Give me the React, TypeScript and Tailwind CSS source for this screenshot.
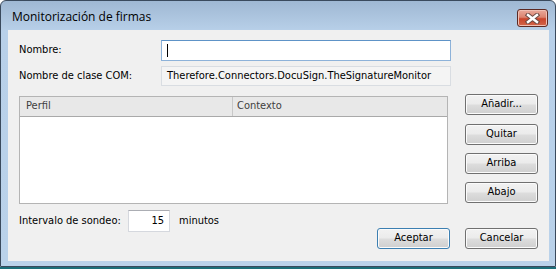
const btn =
  'flex h-[21px] w-[73px] items-center justify-center rounded-[3px] border border-[#707070] bg-[linear-gradient(to_bottom,#f2f2f2_0%,#ebebeb_48%,#dddddd_52%,#cfcfcf_100%)] text-[11px] text-black shadow-[inset_0_0_0_1px_#fbfbfb]';

function CloseButton() {
  return (
    <div className="ml-auto mr-[7px] mt-[8px] flex h-[18px] w-[31px] items-center justify-center rounded-[3px] border border-[#5c2a24] bg-[linear-gradient(to_bottom,#e9a99b_0%,#dc8470_45%,#c9452c_55%,#d2664b_100%)] shadow-[inset_0_0_0_1px_#f0bfb3]">
      <svg width="15" height="11" viewBox="0 0 15 11">
        <path d="M3 2 L12 9 M12 2 L3 9" stroke="#6b4a45" strokeWidth="4.4" strokeLinecap="square" />
        <path d="M3 2 L12 9 M12 2 L3 9" stroke="#ffffff" strokeWidth="2.4" strokeLinecap="square" />
      </svg>
    </div>
  );
}

export default function App() {
  return (
    <div className="h-[269px] w-[558px] bg-white font-['DejaVu_Sans_Condensed','Liberation_Sans',sans-serif] text-[11px] text-black">
      <div className="flex h-[267px] w-[556px] flex-col rounded-t-[6px] border border-[#3a4a5d] bg-[linear-gradient(to_bottom,#9fb8d3_0px,#b8d0e9_30px,#bad2ea_100%)]">
        <div className="flex h-[29px] shrink-0">
          <span className="ml-[11px] mt-[8px] font-['Open_Sans',sans-serif] text-[12px] leading-[16px] text-black">
            Monitorización de firmas
          </span>
          <CloseButton />
        </div>

        <div className="ml-[7px] mr-[6px] flex-1 bg-[#f0f0f0] px-[11px] pt-[10px]">
          <div className="flex h-[21px] items-center">
            <span className="w-[142px]">Nombre:</span>
            <div className="flex h-[21px] w-[290px] items-center border border-[#8db2d9] border-t-[#5e93c7] bg-white pl-[5px]">
              <span className="h-[13px] w-px bg-black" />
            </div>
          </div>

          <div className="mt-[5px] flex h-[20px] items-center">
            <span className="w-[142px]">Nombre de clase COM:</span>
            <div className="flex h-[20px] w-[290px] items-center border border-[#d9dde2] bg-[#f4f4f4] pl-[5px]">
              Therefore.Connectors.DocuSign.TheSignatureMonitor
            </div>
          </div>

          <div className="mt-[8px] flex gap-[17px]">
            <div className="mt-[2px] h-[108px] w-[429px] border border-[#b4b4b4] bg-white">
              <div className="flex h-[20px] border-b border-[#a9a9a9] bg-[#e8e8e8] text-[#404040]">
                <div className="flex w-[213px] items-center border-r border-[#c8c8c8] pl-[6px]">Perfil</div>
                <div className="flex items-center pl-[4px]">Contexto</div>
              </div>
            </div>
            <div className="flex flex-col">
              <div className={btn}>Añadir...</div>
              <div className={`${btn} mt-[9px]`}>Quitar</div>
              <div className={`${btn} mt-[8px]`}>Arriba</div>
              <div className={`${btn} mt-[8px]`}>Abajo</div>
            </div>
          </div>

          <div className="mt-[6px] flex h-[39px]">
            <div className="flex h-[22px] items-center">
              <span className="w-[109px]">Intervalo de sondeo:</span>
              <div className="flex h-[22px] w-[42px] items-center justify-end border border-[#d5d8de] border-t-[#abadb3] bg-white pr-[5px]">
                15
              </div>
              <span className="ml-[9px]">minutos</span>
            </div>
            <div className="ml-auto flex gap-[15px] self-end">
              <div className={`${btn} !border-[#3c7fb1] shadow-[inset_0_0_0_1px_#bfe3f7]`}>Aceptar</div>
              <div className={btn}>Cancelar</div>
            </div>
          </div>
        </div>

        <div className="h-[5px] shrink-0" />
      </div>
      <div className="h-[2px] w-[556px] bg-[#1c6e79]" />
    </div>
  );
}
